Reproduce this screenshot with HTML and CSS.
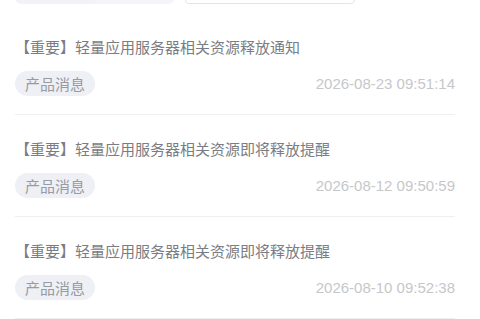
FILE: index.html
```html
<!DOCTYPE html>
<html lang="zh-CN">
<head>
<meta charset="utf-8">
<link rel="stylesheet" href="styles.css">
</head>
<body>
<div class="page">
  <div class="toolbar">
    <div class="segmented"><span class="seg seg-active"></span><span class="seg"></span></div>
    <div class="search"></div>
  </div>
  <ul class="list">
    <li class="item">
      <div class="title">【重要】轻量应用服务器相关资源释放通知</div>
      <div class="meta"><span class="tag">产品消息</span><span class="date">2026-08-23 09:51:14</span></div>
    </li>
    <li class="item">
      <div class="title">【重要】轻量应用服务器相关资源即将释放提醒</div>
      <div class="meta"><span class="tag">产品消息</span><span class="date">2026-08-12 09:50:59</span></div>
    </li>
    <li class="item">
      <div class="title">【重要】轻量应用服务器相关资源即将释放提醒</div>
      <div class="meta"><span class="tag">产品消息</span><span class="date">2026-08-10 09:52:38</span></div>
    </li>
  </ul>
</div>
</body>
</html>
```
FILE: styles.css
```css
* { box-sizing: border-box; }
html, body { margin: 0; padding: 0; background: #fff; }
body { font-family: "Liberation Sans", "Noto Sans CJK SC", sans-serif; overflow: hidden; }
.page { padding: 0 25px 0 15px; width: 480px; }
.toolbar {
  display: flex;
  gap: 10px;
  height: 32px;
  margin-top: -28.5px;
}
.segmented {
  width: 160px;
  height: 32px;
  border-radius: 7px;
  background: #f4f5f8;
  display: flex;
  overflow: hidden;
}
.seg { flex: 1; }
.seg-active { flex: 0 0 80px; background: #f2f3f6; }
.search {
  width: 170px;
  height: 32px;
  border: 1px solid #e3e4e9;
  border-radius: 4px;
  background: #fff;
}
.list { list-style: none; margin: 9.5px 0 0; padding: 0; }
.item {
  padding: 23px 0 18px;
  border-bottom: 1px solid #eeeff3;
}
.title {
  font-family: "Noto Sans CJK SC", sans-serif;
  font-size: 15px;
  line-height: 22px;
  color: #7a7d83;
  white-space: nowrap;
}
.meta {
  margin-top: 13px;
  display: flex;
  align-items: center;
  justify-content: space-between;
  height: 25px;
}
.tag {
  font-family: "Noto Sans CJK SC", sans-serif;
  font-size: 15px;
  line-height: 25px;
  height: 25px;
  padding: 0 10px;
  border-radius: 13px;
  background: #eef0f5;
  color: #979ba3;
}
.date {
  font-family: "Liberation Sans", Arial, sans-serif;
  font-size: 15px;
  color: #c6c7cb;
}
```
